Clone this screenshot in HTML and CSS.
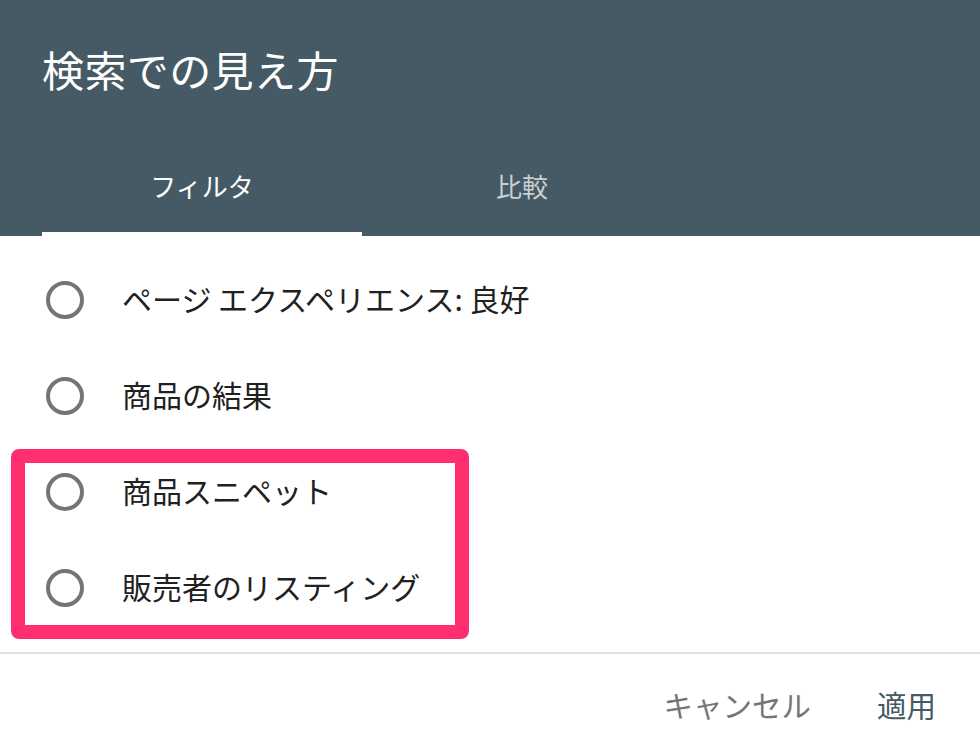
FILE: index.html
```html
<!DOCTYPE html>
<html lang="ja">
<head>
<meta charset="utf-8">
<link rel="stylesheet" href="styles.css">
</head>
<body>
<div class="dialog">
  <header class="header">
    <h1 class="title">検索での見え方</h1>
    <nav class="tabs">
      <div class="tab tab-active">フィルタ</div>
      <div class="tab">比較</div>
    </nav>
  </header>
  <main class="options">
    <div class="option"><span class="radio"></span><span class="label">ページ エクスペリエンス: 良好</span></div>
    <div class="option"><span class="radio"></span><span class="label">商品の結果</span></div>
    <div class="option"><span class="radio"></span><span class="label">商品スニペット</span></div>
    <div class="option"><span class="radio"></span><span class="label">販売者のリスティング</span></div>
    <div class="highlight"></div>
  </main>
  <footer class="footer">
    <button class="btn btn-cancel">キャンセル</button>
    <button class="btn btn-apply">適用</button>
  </footer>
</div>
</body>
</html>
```
FILE: styles.css
```css
html, body {
  margin: 0;
  padding: 0;
  background: #ffffff;
}
body {
  font-family: "Noto Sans CJK JP", "Noto Sans", sans-serif;
  width: 980px;
  height: 746px;
  overflow: hidden;
}
.dialog {
  display: flex;
  flex-direction: column;
}
.header {
  background: #455a64;
  height: 236px;
  display: flex;
  flex-direction: column;
  padding: 0 42px;
}
.title {
  margin: 0;
  height: 140px;
  display: flex;
  align-items: center;
  color: #ffffff;
  font-size: 42px;
  font-weight: 400;
  letter-spacing: 0.4px;
  padding-bottom: 4px;
  box-sizing: border-box;
}
.tabs {
  display: flex;
  height: 96px;
}
.tab {
  width: 320px;
  display: flex;
  align-items: center;
  justify-content: center;
  font-size: 26px;
  color: rgba(255, 255, 255, 0.72);
  box-sizing: border-box;
  border-bottom: 4px solid transparent;
  padding-bottom: 2px;
}
.tab-active {
  color: #ffffff;
  border-bottom-color: #ffffff;
}
.options {
  position: relative;
  padding: 16px 0;
  border-bottom: 2px solid #e0e0e0;
}
.option {
  height: 96px;
  display: flex;
  align-items: center;
  padding-left: 46px;
}
.radio {
  width: 38px;
  height: 38px;
  box-sizing: border-box;
  border: 4px solid #757575;
  border-radius: 50%;
  flex: none;
}
.label {
  margin-left: 38px;
  font-size: 30px;
  color: #212121;
  padding-bottom: 4px;
}
.highlight {
  position: absolute;
  left: 11px;
  top: 213px;
  width: 458px;
  height: 190px;
  box-sizing: border-box;
  border: 14px solid #ff2e6e;
  border-radius: 8px;
}
.footer {
  height: 102px;
  display: flex;
  align-items: center;
  justify-content: flex-end;
  padding-right: 28px;
  gap: 34px;
}
.btn {
  background: none;
  border: none;
  padding: 0 16px 3px;
  font-family: inherit;
  font-size: 29.5px;
  height: 60px;
}
.btn-cancel {
  color: #757575;
}
.btn-apply {
  color: #455a64;
}
```
